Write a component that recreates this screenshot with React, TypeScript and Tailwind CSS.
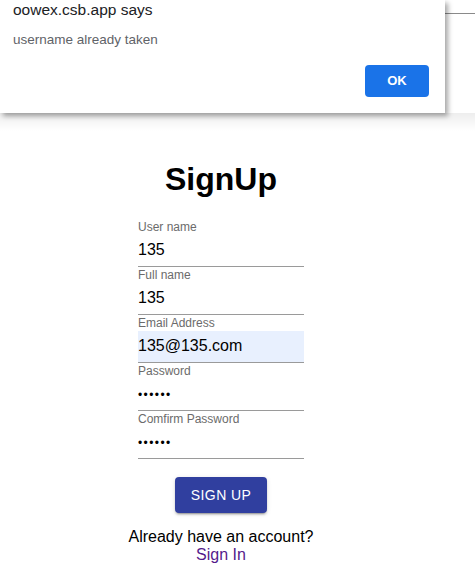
import React from "react";

const font = { fontFamily: '"Liberation Sans", Arial, sans-serif' };

function Field({ label, value, password, filled }: { label: string; value: string; password?: boolean; filled?: boolean }) {
  return (
    <div className="flex h-[48px] w-[166px] flex-col">
      <div className="h-[15px] pt-[1px] text-[12px] leading-[14px] text-[#6b6b6b]">{label}</div>
      <div className="h-[1px]" />
      <div
        className={
          "h-[32px] border-b border-[#9a9a9a] pt-[5px] text-[16px] leading-[19px] text-black " +
          (filled ? "bg-[#e8f0fe]" : "")
        }
      >
        {password ? <span className="text-[12px] tracking-[1.4px]">••••••</span> : value}
      </div>
    </div>
  );
}

export default function App() {
  return (
    <div className="relative h-[588px] w-[475px] overflow-hidden bg-white" style={font}>
      {/* page */}
      <div className="flex w-[442px] flex-col items-center pt-[161px]">
        <h1 className="h-[36px] text-[32px] font-bold leading-[36px] text-black">SignUp</h1>
        <div className="mt-[22px] flex flex-col">
          <Field label="User name" value="135" />
          <Field label="Full name" value="135" />
          <Field label="Email Address" value="135@135.com" filled />
          <Field label="Password" value="" password />
          <Field label="Comfirm Password" value="" password />
        </div>
        <button className="mt-[18px] h-[36px] rounded-[4px] bg-[#303f9f] px-[16px] text-[14px] uppercase tracking-[0.4px] text-white shadow-[0_3px_1px_-2px_rgba(0,0,0,0.2),0_2px_2px_0_rgba(0,0,0,0.14),0_1px_5px_0_rgba(0,0,0,0.12)]">
          Sign Up
        </button>
        <div className="mt-[15px] text-center text-[16px] leading-[18px] text-black">
          <div>Already have an account?</div>
          <div className="text-[#551a8b]">Sign In</div>
        </div>
      </div>

      {/* dialog overlay */}
      <div className="absolute left-[445px] top-[13px] h-[1px] w-[30px] bg-[#8a8a8a]" />
      <div className="absolute left-0 top-[113px] h-[18px] w-[475px] bg-gradient-to-b from-[rgba(0,0,0,0.07)] to-transparent" />
      <div className="absolute left-0 top-0 h-[113px] w-[445px] bg-white shadow-[3px_3px_5px_rgba(0,0,0,0.35)]">
        <div className="absolute left-[13px] top-[1px] text-[15.5px] leading-[18px] text-[#202124]">oowex.csb.app says</div>
        <div className="absolute left-[13px] top-[32px] text-[13.5px] leading-[16px] text-[#5f6368]">username already taken</div>
        <div className="absolute left-[365px] top-[65px] flex h-[32px] w-[64px] items-center justify-center rounded-[4px] bg-[#1a73e8] text-[13px] font-bold text-white">
          OK
        </div>
      </div>
    </div>
  );
}
